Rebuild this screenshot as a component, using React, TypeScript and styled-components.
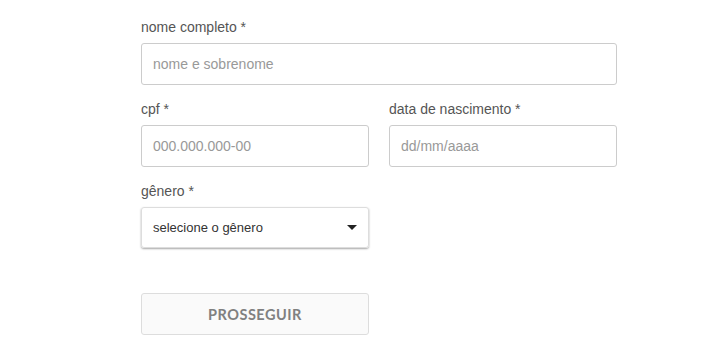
import React, { FC } from 'react';
import styled, { createGlobalStyle } from 'styled-components';

const GlobalStyle = createGlobalStyle`
  body {
    margin: 0;
    background: #fff;
    font-family: "Liberation Sans", Arial, sans-serif;
  }
`;

const Form = styled.form`
  width: 476px;
  padding: 17px 0 0 141px;
  display: flex;
  flex-direction: column;
`;

const Row = styled.div`
  display: grid;
  grid-template-columns: 228px 228px;
  column-gap: 20px;
`;

const Field = styled.div<{ $wide?: boolean }>`
  display: flex;
  flex-direction: column;
  margin-bottom: 14px;
  grid-column: ${({ $wide }) => ($wide ? '1 / span 2' : 'auto')};
`;

const Label = styled.label`
  font-size: 14px;
  line-height: 20px;
  color: #555;
  margin-bottom: 6px;
`;

const Input = styled.input`
  box-sizing: border-box;
  height: 42px;
  width: 100%;
  padding: 0 11px;
  border: 1px solid #ccc;
  border-radius: 3px;
  font-family: inherit;
  font-size: 14px;
  color: #333;
  outline: none;

  &::placeholder {
    color: #999;
  }
`;

const SelectBox = styled.div`
  box-sizing: border-box;
  height: 41px;
  display: flex;
  align-items: center;
  justify-content: space-between;
  padding: 0 11px 0 11px;
  border: 1px solid #ddd;
  border-radius: 3px;
  box-shadow: 0 1px 2px rgba(0, 0, 0, 0.35);
  font-size: 13px;
  color: #333;
`;

const Caret = styled.span`
  width: 0;
  height: 0;
  border-left: 5px solid transparent;
  border-right: 5px solid transparent;
  border-top: 5px solid #222;
`;

const Button = styled.button`
  box-sizing: border-box;
  margin-top: 31px;
  width: 228px;
  height: 42px;
  background: #fafafa;
  border: 1px solid #ddd;
  border-radius: 3px;
  font-family: Lato, "Open Sans", sans-serif;
  font-weight: 700;
  font-size: 14.5px;
  letter-spacing: 0.5px;
  color: #808080;
`;

const App: FC = () => (
  <>
    <GlobalStyle />
    <Form onSubmit={(e) => e.preventDefault()}>
      <Row>
        <Field $wide>
          <Label>nome completo *</Label>
          <Input placeholder="nome e sobrenome" />
        </Field>
        <Field>
          <Label>cpf *</Label>
          <Input placeholder="000.000.000-00" />
        </Field>
        <Field>
          <Label>data de nascimento *</Label>
          <Input placeholder="dd/mm/aaaa" />
        </Field>
        <Field>
          <Label>gênero *</Label>
          <SelectBox>
            selecione o gênero
            <Caret />
          </SelectBox>
        </Field>
      </Row>
      <Button type="submit">PROSSEGUIR</Button>
    </Form>
  </>
);

export default App;
